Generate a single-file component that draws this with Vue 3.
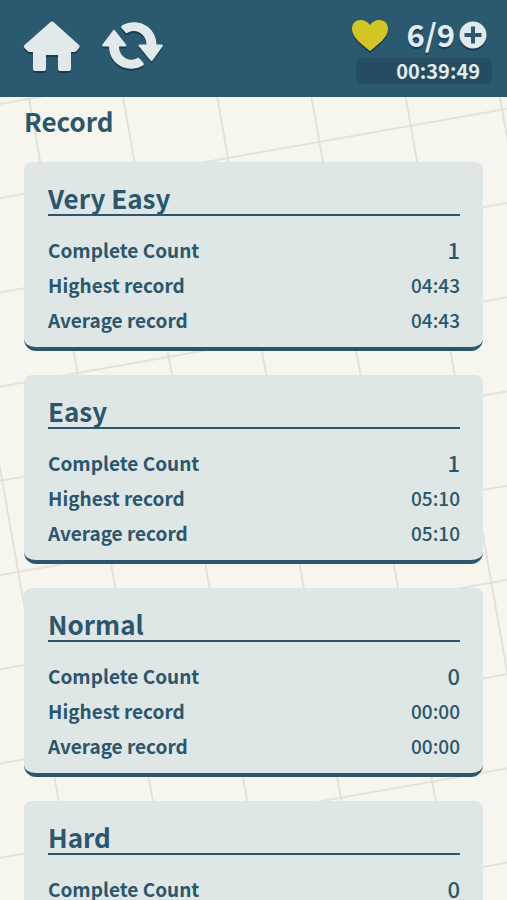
<script setup>
const lives = { current: 6, max: 9, timer: '00:39:49' }

const records = [
  { level: 'Very Easy', count: 1, highest: '04:43', average: '04:43' },
  { level: 'Easy', count: 1, highest: '05:10', average: '05:10' },
  { level: 'Normal', count: 0, highest: '00:00', average: '00:00' },
  { level: 'Hard', count: 0, highest: '00:00', average: '00:00' }
]
</script>

<template>
  <div class="screen">
    <svg class="grid" aria-hidden="true">
      <defs>
        <pattern
          id="tiles"
          width="100"
          height="100"
          patternUnits="userSpaceOnUse"
          patternTransform="translate(28 98) rotate(-10) scale(0.928)"
        >
          <path d="M0 1H100M1 0V100" stroke="#deddd4" stroke-width="1.700" fill="none" />
        </pattern>
      </defs>
      <rect width="100%" height="100%" fill="url(#tiles)" />
    </svg>

    <header class="bar">
      <nav class="actions">
        <button class="icon-button" type="button" aria-label="Home">
          <svg width="60" height="56" viewBox="0 0 60 56">
            <path class="shade" d="M28 4.500Q30 2.500 32 4.500L57 27Q58.500 28.500 57 30L54.500 33Q53.500 34 52 34H49V51Q49 53 47 53H38Q36 53 36 51V37H24V51Q24 53 22 53H13Q11 53 11 51V34H8Q6.500 34 5.500 33L2.500 30Q1 28.500 2.500 27Z" transform="translate(0 2)" />
            <path class="face" d="M28 4.500Q30 2.500 32 4.500L57 27Q58.500 28.500 57 30L54.500 33Q53.500 34 52 34H49V51Q49 53 47 53H38Q36 53 36 51V37H24V51Q24 53 22 53H13Q11 53 11 51V34H8Q6.500 34 5.500 33L2.500 30Q1 28.500 2.500 27Z" />
          </svg>
        </button>
        <button class="icon-button" type="button" aria-label="Refresh">
          <svg width="64" height="56" viewBox="0 0 64 56">
            <defs>
              <g id="arrows">
                <path d="M21.500 10Q20.500 8.500 22 7.500C37 -1 56 8 56.500 26.500H61Q63.500 26.500 62.500 28.500L52.500 42.500Q51.500 44 50.500 42.500L39 28.500Q38 26.500 40 26.500H46.500C46.500 16.500 37 10.500 29 14Q26.500 16 25.500 14.500Z" />
                <path d="M43.500 45Q44.500 46.500 43 47.500C28 56 9.500 47 9 28.500H4Q1.500 28.500 2.500 26.500L13 12.500Q14 11 15 12.500L26 26.500Q27 28.500 25 28.500H19C19 38 28 44.500 36.500 40.500Q38.500 39 39.500 40.500Z" />
              </g>
            </defs>
            <use href="#arrows" class="shade" y="2" />
            <use href="#arrows" class="face" />
          </svg>
        </button>
      </nav>

      <div class="status">
        <div class="lives">
          <svg class="heart" width="40" height="36" viewBox="0 0 40 36" role="img" aria-label="Lives">
            <path class="shade" d="M20 33C13 27 2 20 2 11C2 1 14 -1 20 7C26 -1 38 1 38 11C38 20 27 27 20 33Z" transform="translate(0 2)" />
            <path fill="#d3c526" d="M20 33C13 27 2 20 2 11C2 1 14 -1 20 7C26 -1 38 1 38 11C38 20 27 27 20 33Z" />
          </svg>
          <span class="lives-count">{{ lives.current }}/{{ lives.max }}</span>
          <button class="icon-button" type="button" aria-label="Add lives">
            <svg width="28" height="30" viewBox="0 0 28 30">
              <circle class="shade" cx="14" cy="16" r="13.500" />
              <circle class="face" cx="14" cy="14" r="13.500" />
              <path d="M14 5.500V22.500M5.500 14H22.500" stroke="#2b5a70" stroke-width="4" />
            </svg>
          </button>
        </div>
        <div class="timer">{{ lives.timer }}</div>
      </div>
    </header>

    <main class="content">
      <h1 class="title">Record</h1>
      <section v-for="record in records" :key="record.level" class="card">
        <h2 class="level">{{ record.level }}</h2>
        <dl class="stats">
          <div class="row">
            <dt>Complete Count</dt>
            <dd class="count">{{ record.count }}</dd>
          </div>
          <div class="row">
            <dt>Highest record</dt>
            <dd>{{ record.highest }}</dd>
          </div>
          <div class="row">
            <dt>Average record</dt>
            <dd>{{ record.average }}</dd>
          </div>
        </dl>
      </section>
    </main>
  </div>
</template>

<style>
body {
  margin: 0;
  background: #f7f6ee;
}
</style>

<style scoped>
.screen {
  position: relative;
  display: flex;
  flex-direction: column;
  height: 100vh;
  overflow: hidden;
  background: #f7f6ee;
  color: #2b566c;
  font-family: "Noto Sans CJK JP", "Noto Sans", sans-serif;
  font-weight: 700;
}

.grid {
  position: absolute;
  inset: 0;
  width: 100%;
  height: 100%;
}

.bar {
  position: relative;
  display: flex;
  flex: none;
  align-items: flex-start;
  justify-content: space-between;
  box-sizing: border-box;
  height: 97px;
  padding: 18px 15px 0 22px;
  background: #2b5a70;
  color: #e1ecf0;
}

.actions {
  display: flex;
  gap: 18px;
}

.icon-button {
  display: block;
  padding: 0;
  border: 0;
  background: none;
  cursor: pointer;
}

.icon-button svg {
  display: block;
}

.face {
  fill: #e1e9eb;
}

.shade {
  fill: #173c50;
}

.status {
  display: flex;
  flex-direction: column;
  width: 136px;
}

.lives {
  display: flex;
  align-items: center;
  justify-content: flex-end;
  gap: 4px;
  height: 36px;
  margin: 0 5px 4px -6px;
}

.heart {
  margin-right: auto;
}

.lives-count {
  padding-bottom: 4px;
  font-size: 31px;
  line-height: 32px;
  text-shadow: 0 2px 1px #173c50;
}

.timer {
  padding-right: 12px;
  border-radius: 8px;
  background: #254c61;
  font-size: 20px;
  line-height: 26px;
  text-align: right;
}

.content {
  position: relative;
  display: flex;
  flex: 1;
  flex-direction: column;
  gap: 24px;
  min-height: 0;
  padding: 8px 24px 24px;
  overflow-y: auto;
  scrollbar-width: none;
}

.title {
  margin: 0 0 1px;
  font-size: 26px;
  line-height: 32px;
}

.card {
  flex: none;
  padding: 20px 23px 10px 24px;
  border-bottom: 4px solid #2b566c;
  border-radius: 8px 8px 12px 12px;
  background: #dfe6e6;
}

.level {
  margin: 0 0 16px;
  border-bottom: 2px solid #2b566c;
  font-size: 26px;
  line-height: 32px;
}

.stats {
  margin: 0;
}

.row {
  display: flex;
  align-items: center;
  justify-content: space-between;
  font-size: 19px;
  line-height: 35px;
}

.row dd {
  margin: 0;
  font-weight: 500;
}

.row .count {
  font-size: 22px;
}
</style>
